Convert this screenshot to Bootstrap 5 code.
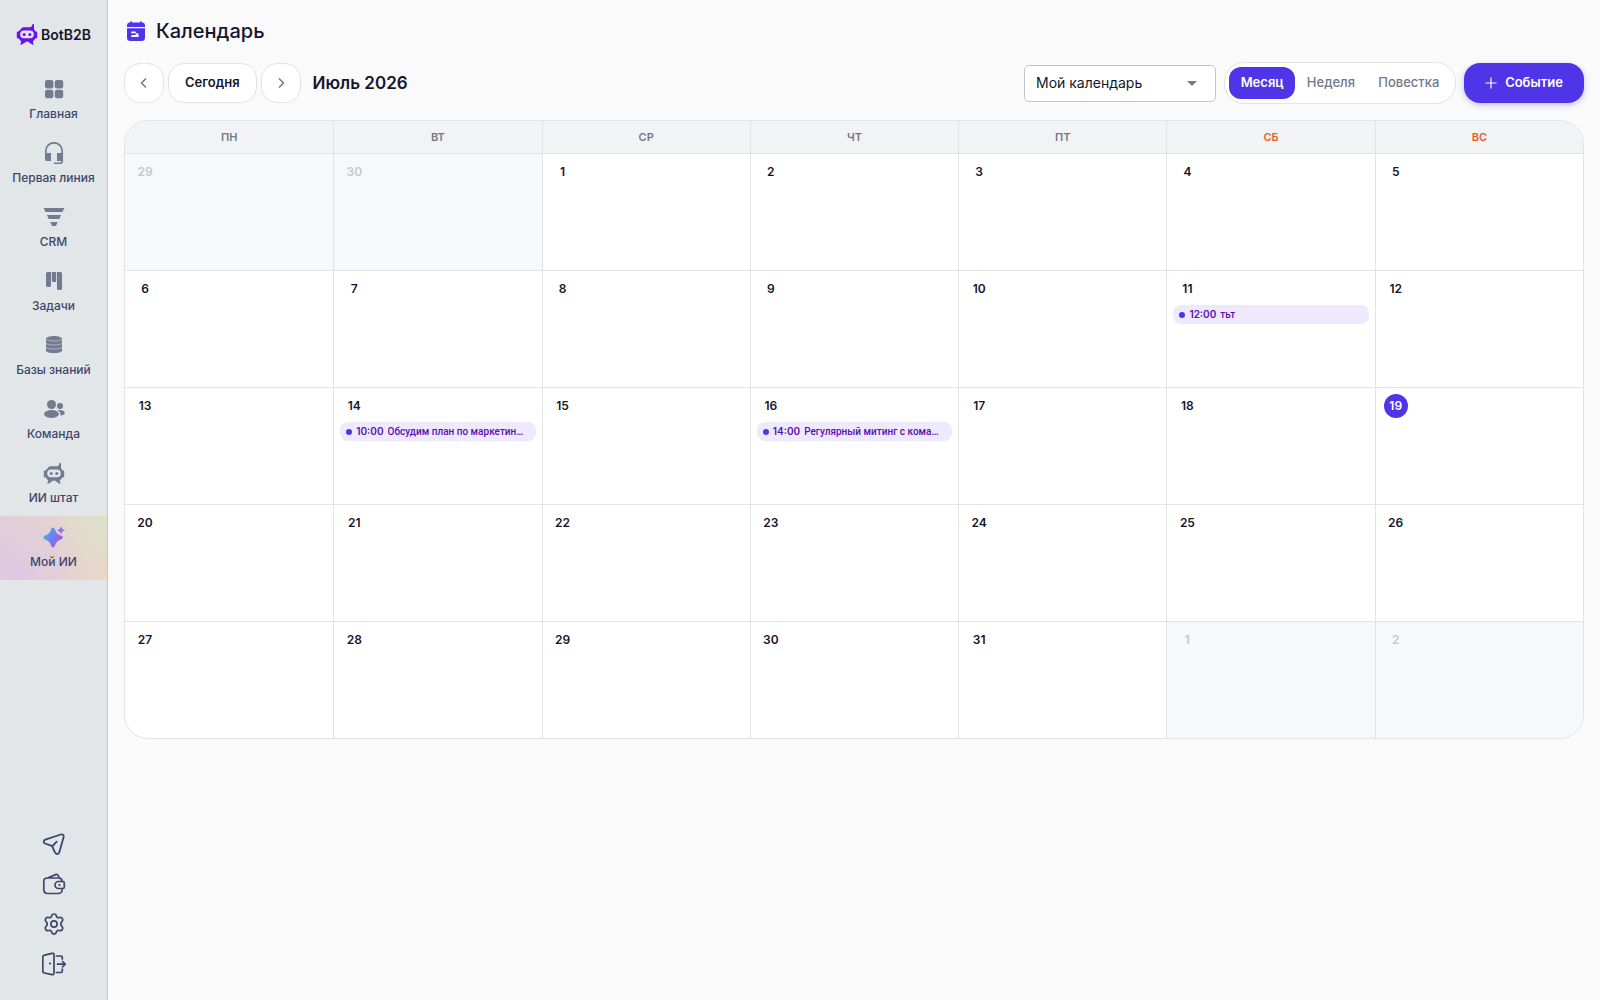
<!DOCTYPE html>
<html lang="ru">
<head>
<meta charset="utf-8">
<meta name="viewport" content="width=device-width, initial-scale=1">
<title>BotB2B — Календарь</title>
<link rel="stylesheet" href="https://cdn.jsdelivr.net/npm/bootstrap@5.3.0/dist/css/bootstrap.min.css">
<style>
  :root { --brand: #5035e8; --ink: #17152b; --muted-ink: #747888; --line: #e1e3e6; }
  body { font-family: Inter, "Noto Sans", sans-serif; background: #fafafa; color: var(--ink); font-size: 13px; }
  svg { display: block; }

  /* Sidebar */
  .side-bar { width: 108px; background: #e2e6e9; border-right: 1px solid #c4c7ca; }
  .brand-link { height: 68px; gap: 3px; font-size: 14px; font-weight: 600; color: var(--ink); text-decoration: none; }
  .side-item { height: 64px; padding-top: 10px; gap: 5px; font-size: 12px; line-height: 18px; font-weight: 500; color: #40456a; text-decoration: none; white-space: nowrap; }
  .side-item svg { color: #757a91; }
  .side-item.current { background: radial-gradient(circle at 100% 0, #dce2ca 0, transparent 45%), radial-gradient(circle at 15% 100%, #e0c8e4 0, transparent 60%), linear-gradient(90deg, #e1ced8, #e7d7c9); }
  .tool-link { height: 40px; color: #40456a; }

  /* Toolbar */
  .page-title { font-size: 20px; line-height: 30px; font-weight: 500; }
  .period { font-size: 17px; line-height: 26px; font-weight: 600; }
  .pill-btn { height: 40px; border: 1px solid var(--line); border-radius: 16px; background: #fff; color: var(--ink); font-size: 13px; font-weight: 600; }
  .pill-btn.square { width: 40px; color: #747888; }
  .cal-pick { position: relative; width: 192px; }
  .cal-pick select { height: 37px; padding: 0 36px 1px 11px; border: 1px solid #c4c5cb; border-radius: 5px; background: #fff; font-size: 14px; color: var(--ink); appearance: none; }
  .cal-pick::after { content: ""; position: absolute; right: 19px; top: 16px; border: 5px solid transparent; border-top-color: #747893; border-bottom: 0; pointer-events: none; }
  .view-switch { width: 232px; padding: 4px; border: 1px solid var(--line); border-radius: 20px; background: #fff; }
  .view-switch button { flex: auto; height: 32px; padding: 0; border: 0; border-radius: 12px; background: none; color: var(--muted-ink); font-weight: 500; }
  .view-switch button.active { background: var(--brand); color: #fff; font-weight: 600; }
  .add-btn { width: 120px; height: 40px; gap: 8px; border: 0; border-radius: 16px; background: var(--brand); color: #fff; font-weight: 600; box-shadow: 0 2px 6px rgba(80, 53, 232, .3); }

  /* Month grid */
  .month-frame { border: 1px solid var(--line); border-radius: 24px; overflow: hidden; background: #fff; }
  .month-grid { width: 100%; table-layout: fixed; border-collapse: separate; border-spacing: 0; }
  .month-grid th { height: 33px; background: #f2f3f5; font-size: 11px; line-height: 16px; font-weight: 600; color: var(--muted-ink); text-align: center; border-bottom: 1px solid var(--line); }
  .month-grid th.weekend { color: #f0592b; }
  .month-grid td { height: 117px; padding: 6px; vertical-align: top; border-bottom: 1px solid var(--line); }
  .month-grid tr > * + * { border-left: 1px solid var(--line); }
  .month-grid tbody tr:last-child td { height: 116px; border-bottom: 0; }
  .month-grid td.outside { background: #f7f8fa; }
  .day-no { display: flex; align-items: center; justify-content: center; width: 24px; height: 24px; margin-left: 2px; border-radius: 50%; font-size: 12px; font-weight: 600; }
  .outside .day-no { color: #c6c7cc; }
  .day-no.today { background: var(--brand); color: #fff; }
  .event-chip { display: flex; align-items: center; gap: 4px; width: 100%; height: 19px; margin-top: 4px; padding: 0 6px; border: 0; border-radius: 8px; background: #eee9fd; color: #5a0fb0; font-size: 10px; font-weight: 600; text-align: left; }
  .event-chip i { flex: none; width: 6px; height: 6px; border-radius: 50%; background: var(--brand); }
  .event-name { font-family: Roboto, Inter, sans-serif; font-weight: 500; }
</style>
<script src="https://cdn.jsdelivr.net/npm/bootstrap@5.3.0/dist/js/bootstrap.bundle.min.js"></script>
</head>
<body>
<svg width="0" height="0" class="position-absolute" aria-hidden="true">
  <symbol id="bot" viewBox="0 0 22 22">
    <path fill="currentColor" fill-rule="evenodd" d="M17.200.8c.5 0 .8.300.8.800v4.600l1.500 2.200h.5c.7 0 1.200.5 1.200 1.200v4.600c0 .7-.5 1.200-1.200 1.200h-.6l-2.600 3.200.8 2.600c.1.500-.3.800-.8.600L13.600 20l-1-1.200H9.400l-1 1.200-3.200 1.800c-.5.2-.9-.1-.8-.6l.8-2.600-2.600-3.200H2c-.7 0-1.200-.5-1.200-1.200V9.600c0-.7.5-1.200 1.200-1.200h.5L5.800 5c.5-.5 1-.7 1.700-.7h5.700c1.600 0 2.700-1 3.300-2.900.1-.4.300-.6.700-.6zM8 7.600a3.800 3.800 0 0 0 0 7.600h6a3.800 3.800 0 0 0 0-7.600z"/>
    <circle cx="8.200" cy="11.400" r="1.500" fill="currentColor"/><circle cx="13.800" cy="11.400" r="1.500" fill="currentColor"/>
  </symbol>
</svg>
<div class="d-flex min-vh-100">
  <aside class="side-bar d-flex flex-column flex-shrink-0">
    <a href="#" class="brand-link d-flex align-items-center justify-content-center">
      <svg width="22" height="22" color="#6a10f5"><use href="#bot"/></svg>BotB2B
    </a>
    <nav class="d-flex flex-column" aria-label="Разделы">
      <a href="#" class="side-item d-flex flex-column align-items-center">
        <svg width="22" height="22" viewBox="0 0 22 22" fill="currentColor"><rect x="2" y="2" width="8.400" height="8.400" rx="2.200"/><rect x="11.800" y="2" width="8.400" height="8.400" rx="2.200"/><rect x="2" y="11.800" width="8.400" height="8.400" rx="2.200"/><rect x="11.800" y="11.800" width="8.400" height="8.400" rx="2.200"/></svg>Главная</a>
      <a href="#" class="side-item d-flex flex-column align-items-center">
        <svg width="22" height="22" viewBox="0 0 22 22" fill="none" stroke="currentColor" stroke-width="1.700"><path d="M2.800 14V9a8.200 8.200 0 0 1 16.400 0V19.500a1.800 1.800 0 0 1-1.800 1.800H11"/><path fill="currentColor" stroke="none" d="M2 11h6v8H4a2 2 0 0 1-2-2zM14 11h6v8h-6z"/></svg>Первая линия</a>
      <a href="#" class="side-item d-flex flex-column align-items-center">
        <svg width="22" height="22" viewBox="0 0 22 22" fill="currentColor"><path d="M.6 2h20.800l-2 4H2.600zM4 9h14l-1.700 4H5.700zM7.300 16h7.400L13 20H9z"/></svg>CRM</a>
      <a href="#" class="side-item d-flex flex-column align-items-center">
        <svg width="22" height="22" viewBox="0 0 22 22" fill="currentColor"><path d="M4.500 2H8v13.500A1.500 1.500 0 0 1 6.500 17h-2A1.500 1.500 0 0 1 3 15.500v-12A1.500 1.500 0 0 1 4.500 2zM8.800 2h4.400v10h-2.900A1.500 1.500 0 0 1 8.800 10.500zM14 2h3.500A1.500 1.500 0 0 1 19 3.500v15a1.500 1.500 0 0 1-1.500 1.500h-2a1.500 1.500 0 0 1-1.500-1.500z"/></svg>Задачи</a>
      <a href="#" class="side-item d-flex flex-column align-items-center">
        <svg width="22" height="22" viewBox="0 0 22 22"><path fill="currentColor" d="M3 5c0-4 16-4 16 0v11.500c0 3.500-16 3.500-16 0z"/><path fill="none" stroke="#b4bac8" stroke-width=".9" d="M3 5.500c2.500 2 13.500 2 16 0M3 9.500c2.500 2 13.500 2 16 0M3 13.500c2.500 2 13.500 2 16 0"/></svg>Базы знаний</a>
      <a href="#" class="side-item d-flex flex-column align-items-center">
        <svg width="22" height="22" viewBox="0 0 22 22" fill="currentColor"><circle cx="8.500" cy="6.500" r="4.500"/><ellipse cx="8.500" cy="16" rx="7.500" ry="4"/><circle cx="17" cy="8" r="3"/><path d="M14.500 12.200c4-.6 7 .6 7.300 2.800.1 1.500-1.800 2.500-4.300 2.600.5-2.200-.7-4.200-3-5.400z"/></svg>Команда</a>
      <a href="#" class="side-item d-flex flex-column align-items-center">
        <svg width="22" height="22"><use href="#bot"/></svg>ИИ штат</a>
      <a href="#" class="side-item current d-flex flex-column align-items-center" aria-current="page">
        <svg width="22" height="22" viewBox="0 0 22 22"><defs><linearGradient id="spark" x1="0" y1=".3" x2="1" y2=".8"><stop offset="0" stop-color="#38b6f5"/><stop offset=".5" stop-color="#7b78ee"/><stop offset="1" stop-color="#b052e8"/></linearGradient></defs><path fill="url(#spark)" d="M10 1.600c.9 0 1.400.8 2.100 2.300 1.400 3.200 2.400 4.200 5.600 5.600 1.500.7 2.300 1.200 2.300 2s-.8 1.400-2.300 2.100c-3.200 1.400-4.200 2.400-5.600 5.600-.7 1.500-1.200 2.300-2.100 2.300s-1.400-.8-2.100-2.300c-1.400-3.200-2.400-4.200-5.600-5.600C.8 12.900.4 12.300.4 11.500s.4-1.300 1.900-2c3.200-1.400 4.200-2.400 5.600-5.600C8.600 2.400 9.100 1.600 10 1.600z"/><path fill="#9670df" d="M18 1c1.200 0 .8 1.500 1.300 2s2.200.2 2.200 1.300-1.700.8-2.200 1.300-.1 2.200-1.300 2.200-.8-1.700-1.300-2.200-2.200-.2-2.200-1.300 1.700-.8 2.200-1.300S16.800 1 18 1z"/></svg>Мой ИИ</a>
    </nav>
    <nav class="mt-auto pb-3 d-flex flex-column" aria-label="Сервис">
      <a href="#" class="tool-link d-flex align-items-center justify-content-center" aria-label="Отправить">
        <svg width="24" height="24" viewBox="0 0 24 24" fill="none" stroke="currentColor" stroke-width="1.800" stroke-linecap="round" stroke-linejoin="round"><path d="M3.300 7.700 18.800 2.500c2.100-.7 3.400.7 2.800 2.800L17.400 20c-.7 2.500-3.400 2.700-4.500.4l-2.300-5.200c-.3-.7-.7-1.100-1.400-1.500L3.100 11.500c-1.900-1-1.800-3.100.2-3.800zM10.500 14l4.200-4.300"/></svg></a>
      <a href="#" class="tool-link d-flex align-items-center justify-content-center" aria-label="Кошелёк">
        <svg width="24" height="24" viewBox="0 0 24 24" fill="none" stroke="currentColor" stroke-width="1.700" stroke-linecap="round" stroke-linejoin="round"><path d="M20 8.500C19.700 6.500 18.500 6 16.500 6H5.500C2.800 6 1.800 7 1.800 9.500v8c0 3 1 4 4 4H16c3 0 4-.8 4.100-4M5.500 6l8-3.400c1.500-.6 2.300-.2 2.900 1.200l.9 2.200"/><path d="M16.500 9.500h4.300c1 0 1.500.5 1.500 1.500v4c0 1-.5 1.500-1.500 1.500h-4.300a3.500 3.500 0 0 1 0-7z"/><path d="M17.400 13h.1" stroke-width="2.200"/></svg></a>
      <a href="#" class="tool-link d-flex align-items-center justify-content-center" aria-label="Настройки">
        <svg width="24" height="24" viewBox="0 0 24 24" fill="none" stroke="currentColor" stroke-width="1.700" stroke-linejoin="round"><circle cx="12" cy="12" r="3.100"/><path d="M9.700 3.700c.5-2.300 4.100-2.300 4.600 0 .4 1.700 1.700 2.400 3.300 1.800 2.300-.8 4.200 2.200 2.500 3.900-1.500 1.500-1.500 3.700 0 5.200 1.700 1.700-.2 4.700-2.500 3.900-1.600-.6-2.900.1-3.300 1.800-.5 2.300-4.100 2.300-4.600 0-.4-1.700-1.700-2.400-3.300-1.800-2.300.8-4.200-2.200-2.500-3.900 1.500-1.500 1.500-3.700 0-5.200-1.700-1.700.2-4.700 2.500-3.900 1.600.6 2.900-.1 3.300-1.800z"/></svg></a>
      <a href="#" class="tool-link d-flex align-items-center justify-content-center" aria-label="Выйти">
        <svg width="24" height="24" viewBox="0 0 24 24" fill="none" stroke="currentColor" stroke-width="1.700" stroke-linecap="round" stroke-linejoin="round"><path d="M2.500 3.200 10 1.400c1.200-.3 2 .2 2 1.500v18.200c0 1.300-.8 1.800-2 1.500L2.500 21C1.300 20.800.8 20.200.8 19V5c0-1.100.5-1.600 1.700-1.800zM14.500 4H19c1 0 1.300.4 1.300 1.300V7M14.500 20.500H19c1 0 1.300-.4 1.300-1.300v-2M15.500 12.200H23M20.500 9.500l2.800 2.700-2.800 2.800"/><path d="M8 11.500h.1" stroke-width="2.200"/></svg></a>
    </nav>
  </aside>

  <main class="flex-grow-1 p-3" style="min-width:0">
    <div class="d-flex align-items-center gap-2 mb-3">
      <svg width="24" height="24" viewBox="0 0 24 24"><path fill="#5035e8" d="M6 2.500h2V3.500h8V2.500h2V3.500c2 0 3 1 3 3v1.500H3V6.500c0-2 1-3 3-3zM3 9.200h18V18.500c0 2.500-1 3.500-3.500 3.500h-11C4 22 3 21 3 18.500z"/><path stroke="#fff" stroke-width="1.800" stroke-linecap="round" d="M8 13.400h3M8 17h6M12.500 15.200h1"/></svg>
      <h1 class="page-title mb-0">Календарь</h1>
    </div>

    <div class="d-flex align-items-center justify-content-between mb-3">
      <div class="d-flex align-items-center gap-1">
        <button type="button" class="pill-btn square d-flex align-items-center justify-content-center p-0" aria-label="Предыдущий месяц"><svg width="16" height="16" viewBox="0 0 16 16" fill="none" stroke="currentColor" stroke-width="1.500"><path d="M10 3.500 5.500 8l4.500 4.500"/></svg></button>
        <button type="button" class="pill-btn px-3">Сегодня</button>
        <button type="button" class="pill-btn square d-flex align-items-center justify-content-center p-0" aria-label="Следующий месяц"><svg width="16" height="16" viewBox="0 0 16 16" fill="none" stroke="currentColor" stroke-width="1.500"><path d="M6 3.500 10.500 8 6 12.500"/></svg></button>
        <h2 class="period mb-0 ms-2">Июль 2026</h2>
      </div>
      <div class="d-flex align-items-center gap-2">
        <div class="cal-pick">
          <select class="w-100 d-block" aria-label="Календарь"><option>Мой календарь</option></select>
        </div>
        <div class="view-switch d-flex" role="group" aria-label="Вид">
          <button type="button" class="active" aria-pressed="true">Месяц</button>
          <button type="button">Неделя</button>
          <button type="button">Повестка</button>
        </div>
        <button type="button" class="add-btn d-flex align-items-center justify-content-center"><svg width="12" height="12" viewBox="0 0 12 12" stroke="currentColor" stroke-width="1.200"><path d="M6 .5v11M.5 6h11"/></svg>Событие</button>
      </div>
    </div>

    <div class="month-frame">
      <table class="month-grid">
        <thead>
          <tr><th scope="col">ПН</th><th scope="col">ВТ</th><th scope="col">СР</th><th scope="col">ЧТ</th><th scope="col">ПТ</th><th scope="col" class="weekend">СБ</th><th scope="col" class="weekend">ВС</th></tr>
        </thead>
        <tbody>
          <tr>
            <td class="outside"><span class="day-no">29</span></td>
            <td class="outside"><span class="day-no">30</span></td>
            <td><span class="day-no">1</span></td>
            <td><span class="day-no">2</span></td>
            <td><span class="day-no">3</span></td>
            <td><span class="day-no">4</span></td>
            <td><span class="day-no">5</span></td>
          </tr>
          <tr>
            <td><span class="day-no">6</span></td>
            <td><span class="day-no">7</span></td>
            <td><span class="day-no">8</span></td>
            <td><span class="day-no">9</span></td>
            <td><span class="day-no">10</span></td>
            <td><span class="day-no">11</span>
              <button type="button" class="event-chip"><i></i><span>12:00</span><span class="event-name text-truncate">тьт</span></button></td>
            <td><span class="day-no">12</span></td>
          </tr>
          <tr>
            <td><span class="day-no">13</span></td>
            <td><span class="day-no">14</span>
              <button type="button" class="event-chip"><i></i><span>10:00</span><span class="event-name text-truncate">Обсудим план по маркетин…</span></button></td>
            <td><span class="day-no">15</span></td>
            <td><span class="day-no">16</span>
              <button type="button" class="event-chip"><i></i><span>14:00</span><span class="event-name text-truncate">Регулярный митинг с кома…</span></button></td>
            <td><span class="day-no">17</span></td>
            <td><span class="day-no">18</span></td>
            <td><span class="day-no today">19</span></td>
          </tr>
          <tr>
            <td><span class="day-no">20</span></td>
            <td><span class="day-no">21</span></td>
            <td><span class="day-no">22</span></td>
            <td><span class="day-no">23</span></td>
            <td><span class="day-no">24</span></td>
            <td><span class="day-no">25</span></td>
            <td><span class="day-no">26</span></td>
          </tr>
          <tr>
            <td><span class="day-no">27</span></td>
            <td><span class="day-no">28</span></td>
            <td><span class="day-no">29</span></td>
            <td><span class="day-no">30</span></td>
            <td><span class="day-no">31</span></td>
            <td class="outside"><span class="day-no">1</span></td>
            <td class="outside"><span class="day-no">2</span></td>
          </tr>
        </tbody>
      </table>
    </div>
  </main>
</div>
</body>
</html>
